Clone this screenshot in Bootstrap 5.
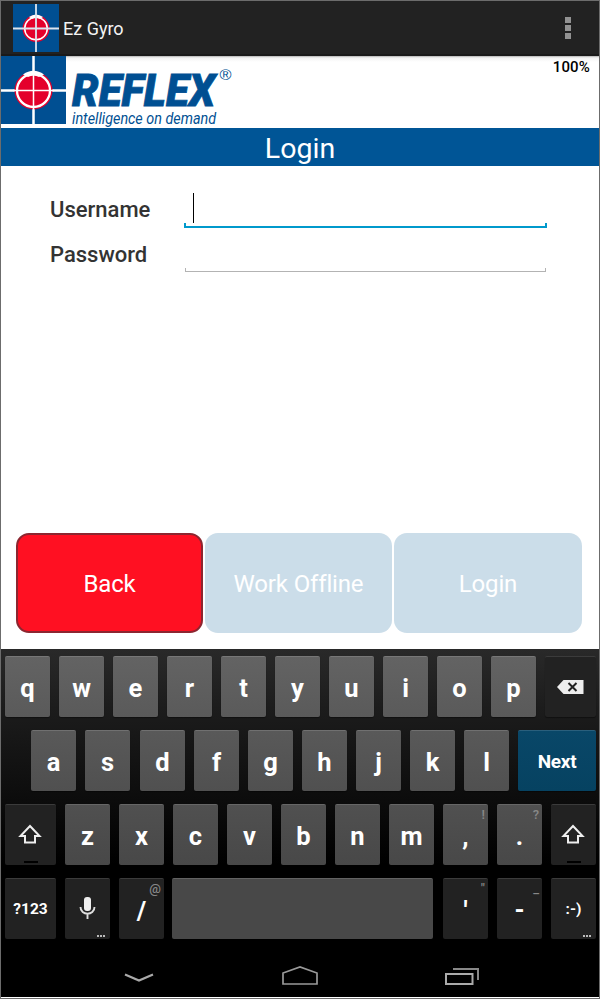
<!DOCTYPE html>
<html lang="en">
<head>
<meta charset="utf-8">
<meta name="viewport" content="width=device-width, initial-scale=1">
<title>Ez Gyro</title>
<link href="https://cdn.jsdelivr.net/npm/bootstrap@5.3.0/dist/css/bootstrap.min.css" rel="stylesheet">
<style>
body{font-family:Roboto,"Liberation Sans",sans-serif;background:#fff;overflow:hidden}
svg{display:block;flex:none}
.screen{width:600px;height:999px;border:1px solid #6c6c6c}
.app-bar{height:55px;background:#222;border-bottom:2px solid #1a1a1a;padding:0 28px 0 12px;color:#f3f3f3}
.app-name{font-size:18px;line-height:24px;margin:2px 0 0 4px}
.dots i{display:block;width:6px;height:6px;background:#929292}
.dots{gap:2px}
.brand-row{height:72px;background:linear-gradient(#aaa 0,#ddd 1px,#f3f3f3 2px,#fff 6px)}
.battery{font-size:15px;line-height:20px;font-weight:500;color:#000;padding:1px 9px 0 0;letter-spacing:.15px}
.title-bar{height:38px;background:#005596;font-size:28.5px;line-height:41px}
.form-area{height:367px;padding:22px 52px 0 49px}
.field{height:45px}
.field label{width:134px;font-size:22px;line-height:44px;font-weight:500;color:#333}
.field input{--ln:#b3b3b3;--w:1px;border:0;outline:0;height:33px;margin:6px 1px 0;padding:0 9px;min-width:0;
background:linear-gradient(var(--ln),var(--ln)) left bottom/100% var(--w) no-repeat,linear-gradient(var(--ln),var(--ln)) left bottom/var(--w) 4px no-repeat,linear-gradient(var(--ln),var(--ln)) right bottom/var(--w) 4px no-repeat}
.entry{position:relative}
.field .active-input{--ln:#0099cc;--w:2px;margin:5px 0 0;height:35px;
background-size:100% 2px,2px 5px,2px 5px}
.caret{position:absolute;left:9px;top:5px;width:1px;height:30px;background:#000}
.actions{height:116px;padding:0 17px 16px 15px;gap:2px}
.action{flex:0 0 187px;height:100px;border:0;border-radius:13px;font-size:24px;color:#fff;background:#cbdde9;padding:2px 0 0;letter-spacing:-.15px}
.action:last-child{flex-basis:188px}
.action-back{background:#ff1022;border:2px solid #8c2630}
.keyboard{height:300px;padding:7px 3px 0 4px;gap:13px;background:linear-gradient(#292929 0,#1c1c1c 60px,#0e0e0e 140px,#000 215px)}
.keys{height:61px;gap:9px}
.key{width:45px;height:61px;border-radius:2px;border-top:1px solid #777;color:#fff;font-weight:700;font-size:25.5px;line-height:62px;text-align:center;position:relative;flex:none;box-shadow:0 1px 1px #0006}
.k1 .key{background:linear-gradient(#636363,#5a5a5a)}
.k2 .key{background:linear-gradient(#595959,#505050);border-top-color:#707070}
.k2 .key:nth-child(2){margin-right:1px}
.k3 .key{background:linear-gradient(#505050,#484848);border-top-color:#666}
.k4 .key{background:#484848;border-top-color:#626262}
.k4 .space{margin:0 1px 0 -1px}
.k4 .slash{line-height:65px}
.keys .dark{background:#222;border-top-color:#3b3b3b}
.keys .next{width:78px;background:linear-gradient(#094768,#064261);border-top-color:#2a5f7c;font-size:19px;letter-spacing:-.3px}
.wide{width:51px}
.hint{position:absolute;right:3px;top:2px;font-size:13px;line-height:15px;color:#888;font-weight:500}
.more{position:absolute;right:5px;bottom:2px;display:flex;gap:1px}
.more i{width:2px;height:2px;background:#bbb}
.lockbar{position:absolute;left:50%;bottom:2px;width:14px;height:2px;margin-left:-7px;background:#000}
.keys .small-key{font-size:15.5px;line-height:61px}
.nav-keys{height:48px;background:#000;padding:16px 119px 0 122px}
</style>
<script src="https://cdn.jsdelivr.net/npm/bootstrap@5.3.0/dist/js/bootstrap.bundle.min.js"></script>
</head>
<body>
<main class="screen d-flex flex-column">
<header class="app-bar d-flex align-items-center justify-content-between">
 <div class="d-flex align-items-center">
  <svg width="46" height="48" viewBox="0 0 46 48"><rect width="46" height="48" fill="#004f92"/><circle cx="23" cy="24.500" r="13.500" fill="#e4002b"/><path d="M16 13Q23 8 30 13L27 15Q23 12 19 15Z" fill="#fff"/><circle cx="23" cy="24.500" r="11.300" fill="none" stroke="#fff" stroke-width="1.500"/><path d="M23 0V48M0 24.500H46" stroke="#dce5ef" stroke-width="1.800"/></svg>
  <span class="app-name">Ez Gyro</span>
 </div>
 <div class="dots d-flex flex-column"><i></i><i></i><i></i></div>
</header>
<section class="brand-row d-flex justify-content-between">
 <svg width="240" height="72" viewBox="0 0 240 72"><rect width="65" height="68" fill="#004f92"/><path d="M32.500 0V68M0 34.500H65" stroke="#fff" stroke-width="2.500"/><circle cx="32.500" cy="34.500" r="19" fill="#e4002b"/><path d="M22 18.500Q32.500 11 43 18.500L38 21Q32.500 18 27 21Z" fill="#fff"/><circle cx="32.500" cy="34.500" r="16.500" fill="none" stroke="#fff" stroke-width="2.300"/><path d="M32.500 15V54M12 34.500H53" stroke="#fff" stroke-width="1.500"/>
 <text x="71" y="49.500" font-size="44" font-weight="900" font-style="italic" fill="#004f92" stroke="#004f92" stroke-width=".8" textLength="143" lengthAdjust="spacingAndGlyphs">REFLEX</text>
 <text x="218.500" y="24" font-family="Liberation Sans" font-size="15" fill="#004f92" textLength="12" lengthAdjust="spacingAndGlyphs">®</text>
 <text x="71" y="68" font-size="16.500" font-style="italic" fill="#004f92" textLength="144" lengthAdjust="spacingAndGlyphs">intelligence on demand</text></svg>
 <span class="battery">100%</span>
</section>
<h1 class="title-bar text-white text-center fw-normal m-0">Login</h1>
<section class="form-area">
 <div class="field d-flex"><label for="user">Username</label><div class="entry d-flex flex-grow-1 align-items-start"><input id="user" class="active-input flex-grow-1" type="text"><span class="caret"></span></div></div>
 <div class="field d-flex"><label for="pass">Password</label><div class="entry d-flex flex-grow-1 align-items-start"><input id="pass" class="flex-grow-1" type="password"></div></div>
</section>
<section class="actions d-flex"><button class="action action-back">Back</button><button class="action">Work Offline</button><button class="action">Login</button></section>
<section class="keyboard d-flex flex-column">
 <div class="keys k1 d-flex"><div class="key">q</div><div class="key">w</div><div class="key">e</div><div class="key">r</div><div class="key">t</div><div class="key">y</div><div class="key">u</div><div class="key">i</div><div class="key">o</div><div class="key">p</div>
 <div class="key wide dark d-flex align-items-center justify-content-center"><svg width="27" height="14" viewBox="0 0 27 14"><path d="M0 7L6.500 0H26.500V14H6.500Z" fill="#eee"/><path d="M11.500 3L19.500 11M19.500 3L11.500 11" stroke="#222" stroke-width="2"/></svg></div></div>
 <div class="keys k2 d-flex justify-content-end"><div class="key">a</div><div class="key">s</div><div class="key">d</div><div class="key">f</div><div class="key">g</div><div class="key">h</div><div class="key">j</div><div class="key">k</div><div class="key">l</div><div class="key next">Next</div></div>
 <div class="keys k3 d-flex"><div class="key wide dark d-flex align-items-center justify-content-center"><svg width="25" height="22" viewBox="0 0 25 22"><path d="M12 2L21.500 12H17V18.500H7V12H2.500Z" fill="none" stroke="#eee" stroke-width="2"/></svg><span class="lockbar"></span></div><div class="key">z</div><div class="key">x</div><div class="key">c</div><div class="key">v</div><div class="key">b</div><div class="key">n</div><div class="key">m</div><div class="key">,<span class="hint">!</span></div><div class="key">.<span class="hint">?</span></div>
 <div class="key dark d-flex align-items-center justify-content-center"><svg width="25" height="22" viewBox="0 0 25 22"><path d="M12 2L21.500 12H17V18.500H7V12H2.500Z" fill="none" stroke="#eee" stroke-width="2"/></svg><span class="lockbar"></span></div></div>
 <div class="keys k4 d-flex"><div class="key wide dark small-key">?123</div>
 <div class="key dark d-flex align-items-center justify-content-center"><svg width="18" height="24" viewBox="0 0 18 24"><rect x="5" width="7" height="14" rx="3" fill="#eee"/><path d="M1.500 10C1.500 19 15.500 19 15.500 10M8.500 17V22" fill="none" stroke="#ddd" stroke-width="1.900"/></svg><span class="more"><i></i><i></i><i></i></span></div>
 <div class="key dark slash">/<span class="hint">@</span></div><div class="key space flex-fill"></div><div class="key dark">'<span class="hint">"</span></div><div class="key dark">-<span class="hint">_</span></div><div class="key dark small-key">:-)<span class="more"><i></i><i></i><i></i></span></div></div>
</section>
<nav class="nav-keys d-flex justify-content-between" aria-label="System">
 <svg width="32" height="22" viewBox="0 0 32 22"><path d="M2 9.500L16 15.500L30 9.500" fill="none" stroke="#aaa" stroke-width="2.200"/></svg>
 <svg width="38" height="22" viewBox="0 0 38 22"><path d="M2 19V8L19 2L36 8V19Z" fill="none" stroke="#999" stroke-width="1.700"/></svg>
 <svg width="36" height="22" viewBox="0 0 36 22"><path d="M2 9H28.500V19H2Z" fill="none" stroke="#aaa" stroke-width="2"/><path d="M9 4H34V15" fill="none" stroke="#888" stroke-width="2"/></svg>
</nav>
</main>
</body>
</html>
